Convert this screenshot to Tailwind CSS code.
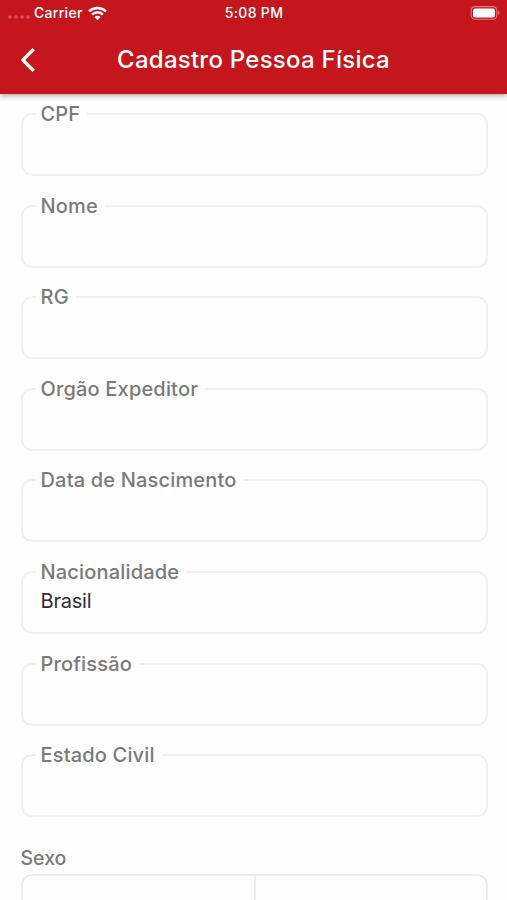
<!DOCTYPE html>
<html lang="pt-BR">
<head>
<meta charset="utf-8">
<title>Cadastro Pessoa Física</title>
<script src="https://cdn.jsdelivr.net/npm/@tailwindcss/browser@4"></script>
</head>
<body class="h-[900px] overflow-hidden bg-[#fefefe] font-['Inter',sans-serif] text-[#7a7a7a]">
<div class="flex h-[900px] flex-col overflow-hidden">
<header class="relative z-10 h-[94px] shrink-0 bg-[#c5161d] text-white shadow-[0_2px_5px_rgba(0,0,0,0.32)]">
  <div class="grid h-[26px] grid-cols-3 items-center pl-2 pr-[7px] text-[14px] font-medium leading-none">
    <div class="flex items-center">
      <svg class="mt-[8px] h-[4px] w-[22px]" viewBox="0 0 22 4" fill="#d9565c"><circle cx="2" cy="2" r="1.7"/><circle cx="8" cy="2" r="1.7"/><circle cx="14" cy="2" r="1.7"/><circle cx="20" cy="2" r="1.7"/></svg>
      <span class="ml-[4px] w-[49px] whitespace-nowrap tracking-[0.3px]">Carrier</span>
      <svg class="ml-[5px] h-[15px] w-[19px]" viewBox="0 0 19 15" fill="none" stroke="white" stroke-width="2.5"><path d="M1.1 5.3C5.8 .8 13.2 .8 17.9 5.3M4.1 8.6C7.2 5.6 11.8 5.6 14.9 8.6"/><path d="M6.4 11C8.2 9.4 10.8 9.4 12.6 11L9.5 14.2Z" fill="white" stroke="none"/></svg>
    </div>
    <div class="whitespace-nowrap text-center tracking-[0.35px]">5:08 PM</div>
    <svg class="h-[14px] w-[30px] justify-self-end" viewBox="0 0 30 14"><rect x="1.2" y=".6" width="25.6" height="12.6" rx="3.6" fill="none" stroke="#e07a7f" stroke-width="1.1"/><rect x="3" y="2.4" width="22" height="9" rx="2" fill="white"/><path d="M28.2 4.8C30 5.5 30 8.3 28.2 9Z" fill="#e07a7f"/></svg>
  </div>
  <div class="grid h-[68px] grid-cols-[60px_1fr_60px] items-center">
    <svg class="ml-5 h-[24px] w-[16px]" viewBox="0 0 16 24" fill="none" stroke="white" stroke-width="3.3" stroke-linejoin="round"><path d="M13.7 1.2L2.8 12L13.7 22.8"/></svg>
    <h1 class="whitespace-nowrap text-center text-[24px] font-medium leading-none tracking-[0.25px]">Cadastro Pessoa Física</h1>
  </div>
</header>
<main class="pl-[20.5px] pr-[19.5px] pt-[8px]">
  <div class="grid auto-rows-[91.6px] text-[20px] font-medium leading-6 tracking-[0.17px]">
    <fieldset class="h-[74px] rounded-[11px] border-2 border-[#f0f0f0] pl-[13px]"><legend class="pl-[5px] pr-[7px]">CPF</legend></fieldset>
    <fieldset class="h-[74px] rounded-[11px] border-2 border-[#f0f0f0] pl-[13px]"><legend class="pl-[5px] pr-[7px]">Nome</legend></fieldset>
    <fieldset class="h-[74px] rounded-[11px] border-2 border-[#f0f0f0] pl-[13px]"><legend class="pl-[5px] pr-[7px]">RG</legend></fieldset>
    <fieldset class="h-[74px] rounded-[11px] border-2 border-[#f0f0f0] pl-[13px]"><legend class="pl-[5px] pr-[7px]">Orgão Expeditor</legend></fieldset>
    <fieldset class="h-[74px] rounded-[11px] border-2 border-[#f0f0f0] pl-[13px]"><legend class="pl-[5px] pr-[7px]">Data de Nascimento</legend></fieldset>
    <fieldset class="h-[74px] rounded-[11px] border-2 border-[#f0f0f0] pl-[13px]"><legend class="pl-[5px] pr-[7px]">Nacionalidade</legend><div class="pl-[5px] pt-[5px] font-normal tracking-[-0.2px] text-[#303030]">Brasil</div></fieldset>
    <fieldset class="h-[74px] rounded-[11px] border-2 border-[#f0f0f0] pl-[13px]"><legend class="pl-[5px] pr-[7px]">Profissão</legend></fieldset>
    <fieldset class="h-[74px] rounded-[11px] border-2 border-[#f0f0f0] pl-[13px]"><legend class="pl-[5px] pr-[7px]">Estado Civil</legend></fieldset>
  </div>
  <div class="mt-[11px] h-[28px] text-[19.5px] font-medium leading-6">Sexo</div>
  <div class="grid h-[63px] grid-cols-[233px_1fr] rounded-[11px] border-2 border-[#ececec]"><div class="border-r-2 border-[#ececec]"></div><div></div></div>
</main>
</div>
</body>
</html>
